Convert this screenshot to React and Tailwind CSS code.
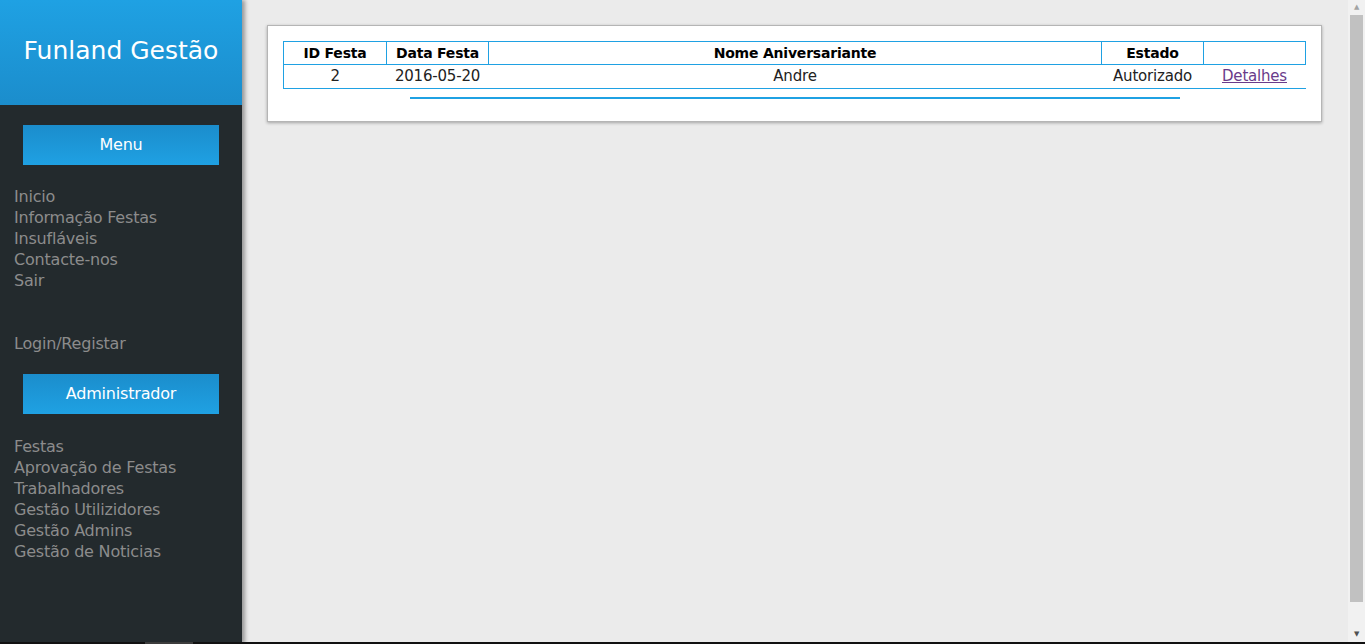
import React from 'react';

const menuLinks = ['Inicio', 'Informação Festas', 'Insufláveis', 'Contacte-nos', 'Sair'];
const adminLinks = ['Festas', 'Aprovação de Festas', 'Trabalhadores', 'Gestão Utilizidores', 'Gestão Admins', 'Gestão de Noticias'];

const font = { fontFamily: '"DejaVu Sans", "Liberation Sans", sans-serif' };

function SideButton({ children }) {
    return (
        <div className="mx-[23px] h-[40px] flex items-center justify-center bg-gradient-to-b from-[#1b8dcc] to-[#1fa1e3] text-white text-[16px]">
            {children}
        </div>
    );
}

export default function App() {
    return (
        <div className="flex min-h-[644px] bg-[#ebebeb] tracking-[-0.2px]" style={font}>
            {/* Sidebar */}
            <aside className="w-[242px] shrink-0 bg-[#232a2d] shadow-[3px_0_4px_rgba(0,0,0,0.35)] z-10">
                <div className="h-[105px] flex items-center justify-center pb-[3px] bg-gradient-to-b from-[#1fa1e3] to-[#1b8dcc]">
                    <h1 className="text-white text-[25px] font-normal tracking-[0px]">Funland Gestão</h1>
                </div>
                <div className="pt-[20px]">
                    <SideButton>Menu</SideButton>
                </div>
                <ul className="mt-[21px] px-[14px] text-[#8c8c8c] text-[16px] leading-[21px]">
                    {menuLinks.map((l) => (
                        <li key={l}>{l}</li>
                    ))}
                </ul>
                <div className="mt-[42px] px-[14px] text-[#8c8c8c] text-[16px] leading-[21px]">Login/Registar</div>
                <div className="mt-[20px]">
                    <SideButton>Administrador</SideButton>
                </div>
                <ul className="mt-[22px] px-[14px] text-[#8c8c8c] text-[16px] leading-[21px]">
                    {adminLinks.map((l) => (
                        <li key={l}>{l}</li>
                    ))}
                </ul>
            </aside>

            {/* Main */}
            <main className="flex-1 pt-[25px] pl-[25px] pr-[43px]">
                <div className="bg-white border border-[#b5b5b5] shadow-[0_1px_3px_rgba(0,0,0,0.3)] px-[15px] pt-[15px] pb-[22px]">
                    <table className="w-full border-collapse text-[15px] text-black">
                        <thead>
                            <tr className="h-[23px] text-[14px]">
                                <th className="border border-[#1fa1e3] w-[103px] font-bold">ID Festa</th>
                                <th className="border border-[#1fa1e3] w-[102px] font-bold">Data Festa</th>
                                <th className="border border-[#1fa1e3] font-bold">Nome Aniversariante</th>
                                <th className="border border-[#1fa1e3] w-[102px] font-bold">Estado</th>
                                <th className="border border-[#1fa1e3] w-[102px]"></th>
                            </tr>
                        </thead>
                        <tbody>
                            <tr className="h-[24px] border-b border-[#1fa1e3] text-[#222]">
                                <td className="border-l border-[#1fa1e3] text-center">2</td>
                                <td className="text-center">2016-05-20</td>
                                <td className="text-center">Andre</td>
                                <td className="text-center">Autorizado</td>
                                <td className="text-center">
                                    <a href="#" className="underline text-[#6a3b8a]">Detalhes</a>
                                </td>
                            </tr>
                        </tbody>
                    </table>
                    <div className="mt-[8px] mx-auto w-[770px] h-[2px] bg-[#1fa1e3]"></div>
                </div>
            </main>

            {/* Browser scrollbar */}
            <div className="fixed top-0 right-0 w-[17px] h-[642px] bg-[#f1f1f1] flex flex-col items-center z-20">
                <div className="h-[15px] flex items-center justify-center text-[#a3a3a3] text-[7px] leading-none">▲</div>
                <div className="w-[13px] h-[587px] bg-[#c1c1c1]"></div>
                <div className="flex-1"></div>
                <div className="h-[15px] flex items-center justify-center text-[#505050] text-[7px] leading-none">▼</div>
            </div>
            <div className="fixed bottom-0 left-0 right-0 h-[2px] bg-[#111] z-20">
                <div className="ml-[145px] w-[48px] h-[2px] bg-[#3c3c3c]"></div>
            </div>
        </div>
    );
}
